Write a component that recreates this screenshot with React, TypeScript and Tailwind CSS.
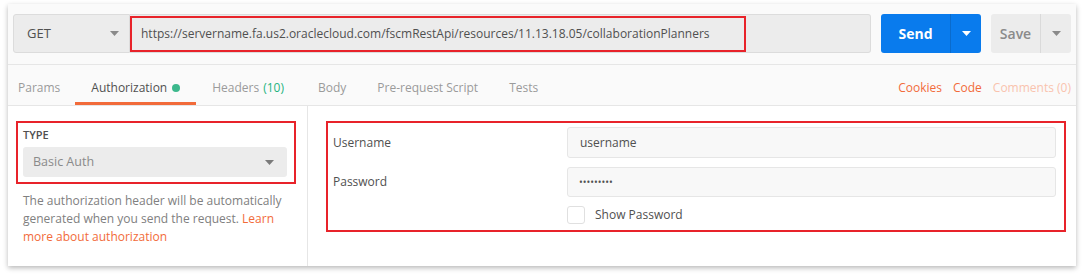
import React from "react";

const Caret = ({ className }: { className: string }) => (
    <svg width="9" height="5" viewBox="0 0 9 5" className={className}>
        <path d="M0 0h9L4.5 5z" fill="currentColor" />
    </svg>
);

export default function App() {
    return (
        <div className="w-[1084px] h-[275px] bg-white pt-[4px] pl-[8px] font-['Open_Sans',sans-serif]">
            <div className="w-[1068px] h-[262px] bg-white shadow-[0_2px_5px_rgba(0,0,0,0.28)] flex flex-col">
                {/* request bar */}
                <div className="flex items-center pl-[5px] pr-[5px] pt-[10px] pb-[11px] bg-[#fafafa] border-b border-[#e6e6e6]">
                    <div className="w-[117px] h-[39px] flex items-center justify-between pl-[13px] pr-[10px] bg-[#ececec] border border-[#dcdcdc] rounded-l-[3px] text-[13px] text-[#505050]">
                        GET
                        <Caret className="text-[#8a8a8a]" />
                    </div>
                    <div className="w-[741px] h-[39px] flex items-center bg-[#ececec] border border-l-0 border-[#dcdcdc] rounded-r-[3px]">
                        <span className="w-[616px] h-[36px] flex items-center pl-[9px] border-2 border-[#e8232a] text-[12px] text-[#505050] whitespace-nowrap">
                            https://servername.fa.us2.oraclecloud.com/fscmRestApi/resources/11.13.18.05/collaborationPlanners
                        </span>
                    </div>
                    <div className="ml-[10px] w-[100px] h-[39px] flex rounded-[3px] bg-[#097bed] text-white">
                        <div className="w-[70px] flex items-center justify-center text-[14px] font-bold border-r border-[#0a6bcc]">Send</div>
                        <div className="flex-1 flex items-center justify-center">
                            <Caret className="text-white" />
                        </div>
                    </div>
                    <div className="ml-[10px] w-[80px] h-[39px] flex rounded-[3px] bg-[#ececec] text-[#8a8a8a]">
                        <div className="w-[50px] flex items-center justify-center text-[14px] font-semibold border-r border-[#dadada]">Save</div>
                        <div className="flex-1 flex items-center justify-center">
                            <Caret className="text-[#8a8a8a]" />
                        </div>
                    </div>
                </div>

                {/* tabs */}
                <div className="h-[41px] flex items-stretch justify-between bg-[#fafafa] border-b border-[#e6e6e6] text-[12px] pr-[5px]">
                    <div className="flex items-stretch pl-[10px] text-[#9b9b9b]">
                        <div className="flex items-center pt-[6px] pr-[15px]">Params</div>
                        <div className="flex items-center pt-[9px] px-[16px] text-[#505050] border-b-[3px] border-[#f26b3a]">
                            Authorization
                            <span className="ml-[5px] w-[8px] h-[8px] rounded-full bg-[#3cb88c]" />
                        </div>
                        <div className="flex items-center pt-[6px] pl-[16px] pr-[34px]">
                            Headers <span className="ml-[4px] text-[#26b47f]">(10)</span>
                        </div>
                        <div className="flex items-center pt-[6px] pr-[31px]">Body</div>
                        <div className="flex items-center pt-[6px] pr-[31px]">Pre-request Script</div>
                        <div className="flex items-center pt-[6px]">Tests</div>
                    </div>
                    <div className="flex items-center pt-[6px] gap-[11px]">
                        <span className="text-[#f26b3a]">Cookies</span>
                        <span className="text-[#f26b3a]">Code</span>
                        <span className="text-[#f9c3ae]">Comments (0)</span>
                    </div>
                </div>

                {/* body */}
                <div className="flex-1 flex">
                    <div className="w-[300px] border-r border-[#e6e6e6] pl-[8px] pt-[15px]">
                        <div className="w-[280px] h-[63px] border-2 border-[#e8232a] px-[5px] pt-[4px]">
                            <div className="text-[11px] font-semibold text-[#505050] leading-[16px]">TYPE</div>
                            <div className="mt-[4px] w-[264px] h-[30px] flex items-center justify-between pl-[10px] pr-[13px] bg-[#ececec] rounded-[3px] text-[12.5px] text-[#8a8a8a]">
                                Basic Auth
                                <Caret className="text-[#7a7a7a]" />
                            </div>
                        </div>
                        <p className="mt-[8px] ml-[7px] w-[270px] text-[12px] leading-[18px] text-[#808080]">
                            The authorization header will be automatically generated when you send the request.{" "}
                            <span className="text-[#f26b3a]">Learn more about authorization</span>
                        </p>
                    </div>
                    <div className="flex-1 pl-[18px] pt-[15px]">
                        <div className="w-[740px] h-[111px] border-2 border-[#e8232a] pl-[5px] pr-[8px] pt-[4px] grid grid-cols-[234px_1fr] gap-y-[9px] content-start text-[12px] text-[#505050]">
                            <div className="h-[31px] flex items-center">Username</div>
                            <div className="h-[31px] flex items-center pl-[12px] bg-[#f8f8f8] border border-[#e6e6e6] rounded-[3px]">username</div>
                            <div className="h-[30px] flex items-center">Password</div>
                            <div className="h-[30px] flex items-center pl-[11px] bg-[#f8f8f8] border border-[#e6e6e6] rounded-[3px] text-[10px]">•••••••••</div>
                            <div />
                            <div className="flex items-center gap-[10px]">
                                <span className="w-[18px] h-[18px] bg-white border border-[#e0e0e0] rounded-[3px]" />
                                Show Password
                            </div>
                        </div>
                    </div>
                </div>
            </div>
        </div>
    );
}
